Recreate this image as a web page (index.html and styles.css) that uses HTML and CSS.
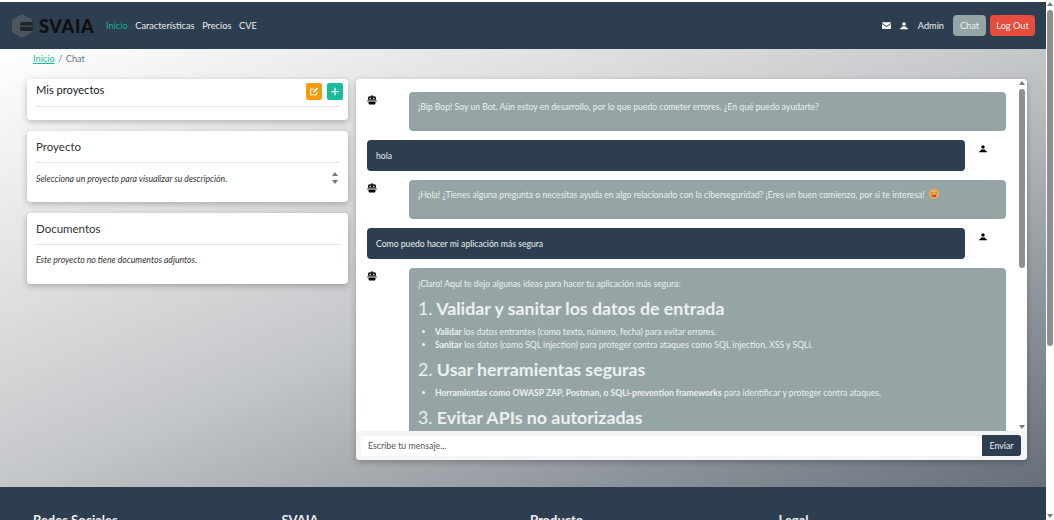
FILE: index.html
```html
<!DOCTYPE html>
<html lang="es">
<head>
  <meta charset="UTF-8" />
  <title>SVAIA - Chat</title>
  <link rel="stylesheet" href="styles.css">
</head>
<body>

<div class="page">
  <nav class="navbar">
    <a class="brand" href="#">
      <svg class="brand-logo" viewBox="0 0 22 24">
        <path d="M11 0 21 5.500V18L11 24 1 18V5.500Z" fill="#4b5660"/>
        <rect x="9" y="8" width="13" height="9" rx="2" fill="#23272c"/>
        <rect x="9" y="11.500" width="13" height="1.200" fill="#4b5660"/>
      </svg>
      <span class="brand-name">SVAIA</span>
    </a>
    <ul class="nav-links">
      <li><a class="active" href="#">Inicio</a></li>
      <li><a href="#">Características</a></li>
      <li><a href="#">Precios</a></li>
      <li><a href="#">CVE</a></li>
    </ul>
    <div class="nav-right">
      <svg class="nav-icon" viewBox="0 0 16 12"><path d="M0 1.500V1a1 1 0 0 1 1-1h14a1 1 0 0 1 1 1v.5L8 7ZM0 3.200V11a1 1 0 0 0 1 1h14a1 1 0 0 0 1-1V3.200L8 8.800Z" fill="#fff"/></svg>
      <svg class="nav-icon user" viewBox="0 0 12 12"><use href="#user-shape"/></svg>
      <span class="nav-user">Admin</span>
      <a class="btn btn-chat" href="#">Chat</a>
      <a class="btn btn-logout" href="#">Log Out</a>
    </div>
  </nav>

  <main class="content">
    <div class="breadcrumb"><a href="#">Inicio</a><span class="sep">/</span><span>Chat</span></div>

    <div class="columns">
      <aside class="sidebar">
        <section class="card card-projects">
          <div class="card-head">
            <h3 class="title-dark">Mis proyectos</h3>
            <div class="tools">
              <button class="tool orange" type="button">
                <svg viewBox="0 0 12 12"><path d="M9 6.500V10H2V3h3.500" fill="none" stroke="#fff" stroke-width="1.200"/><path d="M5 7.200 5.400 5.200 9.400 1.200 10.800 2.600 6.800 6.600Z" fill="#fff"/></svg>
              </button>
              <button class="tool teal" type="button">
                <svg viewBox="0 0 12 12"><path d="M6 1.500v9M1.500 6h9" stroke="#fff" stroke-width="1.500"/></svg>
              </button>
            </div>
          </div>
          <hr>
        </section>

        <section class="card">
          <h3>Proyecto</h3>
          <hr>
          <div class="card-row">
            <p>Selecciona un proyecto para visualizar su descripción.</p>
            <div class="sort-arrows"><i class="arrow-up"></i><i class="arrow-down"></i></div>
          </div>
        </section>

        <section class="card">
          <h3>Documentos</h3>
          <hr>
          <p>Este proyecto no tiene documentos adjuntos.</p>
        </section>
      </aside>

      <section class="chat">
        <div class="chat-body">
          <div class="messages">
            <div class="msg bot">
              <svg class="msg-icon" viewBox="0 0 12 12"><use href="#robot-shape"/></svg>
              <div class="bubble">¡Bip Bop! Soy un Bot. Aún estoy en desarrollo, por lo que puedo cometer errores. ¿En qué puedo ayudarte?</div>
            </div>
            <div class="msg user">
              <div class="bubble">hola</div>
              <svg class="msg-icon" viewBox="0 0 12 12"><use href="#user-shape"/></svg>
            </div>
            <div class="msg bot">
              <svg class="msg-icon" viewBox="0 0 12 12"><use href="#robot-shape"/></svg>
              <div class="bubble">¡Hola! ¿Tienes alguna pregunta o necesitas ayuda en algo relacionado con la ciberseguridad? ¡Eres un buen comienzo, por si te interesa!
                <svg class="smile" viewBox="0 0 12 12"><circle cx="6" cy="6" r="6" fill="#f3ab4e"/><path d="M2.500 4.800q1-1.200 2 0M7.500 4.800q1-1.200 2 0" fill="none" stroke="#8a4a1c" stroke-width=".9"/><path d="M2.600 6.800h6.800Q9 10 6 10T2.600 6.800Z" fill="#b5562a"/></svg>
              </div>
            </div>
            <div class="msg user">
              <div class="bubble">Como puedo hacer mi aplicación más segura</div>
              <svg class="msg-icon" viewBox="0 0 12 12"><use href="#user-shape"/></svg>
            </div>
            <div class="msg bot">
              <svg class="msg-icon" viewBox="0 0 12 12"><use href="#robot-shape"/></svg>
              <div class="bubble long">
                <p>¡Claro! Aquí te dejo algunas ideas para hacer tu aplicación más segura:</p>
                <h2><span>1.</span> Validar y sanitar los datos de entrada</h2>
                <ul>
                  <li><b>Validar</b> los datos entrantes (como texto, número, fecha) para evitar errores.</li>
                  <li><b>Sanitar</b> los datos (como SQL injection) para proteger contra ataques como SQL injection, XSS y SQLi.</li>
                </ul>
                <h2><span>2.</span> Usar herramientas seguras</h2>
                <ul>
                  <li><b>Herramientas como OWASP ZAP, Postman, o SQLi-prevention frameworks</b> para identificar y proteger contra ataques.</li>
                </ul>
                <h2><span>3.</span> Evitar APIs no autorizadas</h2>
              </div>
            </div>
          </div>
          <div class="scrollbar chat-scroll">
            <i class="arrow-up"></i>
            <div class="thumb"></div>
            <i class="arrow-down"></i>
          </div>
        </div>
        <form class="chat-form">
          <input type="text" placeholder="Escribe tu mensaje...">
          <button type="submit">Enviar</button>
        </form>
      </section>
    </div>
  </main>

  <footer class="footer">
    <h4>Redes Sociales</h4>
    <h4>SVAIA</h4>
    <h4>Producto</h4>
    <h4>Legal</h4>
  </footer>
</div>

<div class="scrollbar page-scroll">
  <i class="arrow-up"></i>
  <div class="thumb"></div>
  <i class="arrow-down"></i>
</div>

<svg class="defs" width="0" height="0">
  <defs>
    <g id="user-shape">
      <circle cx="6" cy="3" r="2.600"/>
      <path d="M2.600 6.600h6.800l.6 2.600H12V11H0V9.200h2Z"/>
    </g>
    <g id="robot-shape">
      <rect x="5.400" y="0" width="1.200" height="2"/>
      <path d="M3.200 1.600h5.600a2 2 0 0 1 2 2v2.200H1.200V3.600a2 2 0 0 1 2-2ZM3.800 3a.9.9 0 1 0 0 1.800.9.9 0 0 0 0-1.800ZM8.200 3a.9.9 0 1 0 0 1.800.9.9 0 0 0 0-1.800Z" fill-rule="evenodd"/>
      <rect x="0" y="6.600" width="12" height="1" />
      <path d="M1.800 8.200h8.400V10a1.500 1.500 0 0 1-1.500 1.500H3.300A1.500 1.500 0 0 1 1.800 10Z"/>
    </g>
  </defs>
</svg>

</body>
</html>
```

FILE: styles.css
```css
* {
  box-sizing: border-box;
}
html, body {
  height: 520px;
  overflow: hidden;
}
body {
  margin: 0;
  display: flex;
  background: #fff;
  font-family: 'Lato', sans-serif;
  font-size: 9.2px;
  color: #333;
}
a {
  text-decoration: none;
}
.defs {
  display: none;
}
.page {
  width: 1046px;
  height: 520px;
  padding-top: 2px;
  display: flex;
  flex-direction: column;
  overflow: hidden;
}

/* navbar */
.navbar {
  height: 47px;
  flex-shrink: 0;
  background: #2c3e50;
  display: flex;
  align-items: center;
  padding: 0 11px;
}
.brand {
  display: flex;
  align-items: center;
  gap: 6px;
  width: 95px;
}
.brand-logo {
  width: 22px;
  height: 24px;
}
.brand-name {
  color: #0d0f12;
  font-weight: 900;
  font-size: 18px;
  letter-spacing: .7px;
}
.nav-links {
  display: flex;
  gap: 7.7px;
  list-style: none;
  margin: 0;
  padding: 0;
}
.nav-links a {
  color: #ecf0f1;
  font-size: 9.2px;
}
.nav-links a.active {
  color: #18b08f;
}
.nav-right {
  margin-left: auto;
  display: flex;
  align-items: center;
}
.nav-icon {
  width: 9px;
  height: 7px;
  margin-right: 9px;
}
.nav-icon.user {
  width: 8px;
  height: 8px;
  fill: #fff;
}
.nav-user {
  color: #ecf0f1;
  margin: 0 9px 0 1px;
}
.btn {
  height: 21px;
  line-height: 21px;
  border-radius: 4px;
  color: #ecf0f1;
  text-align: center;
}
.btn-chat {
  width: 33px;
  background: #95a5a6;
  margin-right: 4px;
}
.btn-logout {
  width: 45px;
  background: #e74c3c;
}

/* main area */
.content {
  flex: 1;
  padding: 0 19px 0 27px;
  background: linear-gradient(to bottom right, #fff 0%, #c4c7c9 50%, #666e79 100%);
}
.breadcrumb {
  height: 30px;
  padding: 4px 0 0 6px;
  display: flex;
  align-items: flex-start;
  line-height: 12px;
  color: #6c757d;
}
.breadcrumb a {
  color: #18bc9c;
  text-decoration: underline;
}
.sep {
  margin: 0 3.5px;
}
.columns {
  display: flex;
  gap: 8px;
  align-items: flex-start;
}

/* left cards */
.sidebar {
  width: 321px;
  flex-shrink: 0;
  display: flex;
  flex-direction: column;
  gap: 11px;
}
.card {
  background: #fff;
  border-radius: 4px;
  height: 71px;
  padding: 9px 9px 0;
  box-shadow: 0 2px 6px rgba(0, 0, 0, .25);
}
.card h3 {
  margin: 0;
  font-size: 11.5px;
  font-weight: 400;
  color: #333;
  line-height: 14px;
}
.card h3.title-dark {
  color: #15181c;
  font-size: 11.1px;
}
.card hr {
  border: 0;
  border-top: 1px solid #e3e3e3;
  margin: 8px 0 9px;
}
.card p {
  margin: 0;
  font-size: 8.7px;
  font-style: italic;
  color: #333;
  line-height: 11px;
}
.card-projects {
  height: 41px;
  padding-top: 4px;
}
.card-head {
  display: flex;
  justify-content: space-between;
  height: 18px;
}
.card-projects hr {
  margin: 5px 0 0;
}
.tools {
  display: flex;
  gap: 5px;
  margin-right: -4px;
}
.tool {
  width: 16px;
  height: 17px;
  border: 0;
  border-radius: 2px;
  padding: 3px;
  display: flex;
}
.tool.orange {
  background: #f39c12;
}
.tool.teal {
  background: #18bc9c;
}
.card-row {
  display: flex;
  justify-content: space-between;
  align-items: center;
}
.sort-arrows {
  display: flex;
  flex-direction: column;
  gap: 4px;
  margin-right: 1px;
}
.arrow-up, .arrow-down {
  display: block;
  width: 0;
  height: 0;
  border-left: 3px solid transparent;
  border-right: 3px solid transparent;
}
.arrow-up {
  border-bottom: 4px solid #777;
}
.arrow-down {
  border-top: 4px solid #777;
}

/* chat */
.chat {
  width: 671px;
  height: 381px;
  flex-shrink: 0;
  background: #fff;
  border-radius: 4px;
  box-shadow: 0 2px 6px rgba(0, 0, 0, .25);
  display: flex;
  flex-direction: column;
  overflow: hidden;
}
.chat-body {
  flex: 1;
  display: flex;
  min-height: 0;
}
.messages {
  flex: 1;
  overflow: hidden;
  padding: 13px 11px 0;
}
.msg {
  display: flex;
  margin-bottom: 9px;
}
.msg-icon {
  flex-shrink: 0;
  width: 10px;
  height: 10px;
}
.msg.bot .msg-icon {
  margin: 3px 32px 0 0;
}
.msg.user .msg-icon {
  width: 8px;
  height: 8px;
  margin: 5px 19px 0 14px;
}
.bubble {
  flex: 1;
  border-radius: 4px;
  padding: 9px;
  font-size: 8.65px;
  line-height: 12px;
  color: #ecf0f1;
}
.msg.bot .bubble {
  background: #95a5a6;
  min-height: 39px;
}
.msg.user .bubble {
  background: #2c3e50;
  min-height: 31px;
  padding-top: 10px;
}
.smile {
  width: 10px;
  height: 10px;
  margin-left: 2px;
  vertical-align: -1px;
}
.bubble.long {
  padding-top: 10px;
  padding-bottom: 40px;
}
.bubble.long p {
  margin: 0 0 8px;
}
.bubble h2 {
  margin: 0 0 6px;
  font-size: 17.8px;
  line-height: 21px;
  font-weight: 700;
}
.bubble h2 span {
  font-weight: 400;
}
.bubble ul {
  margin: 0 0 8px;
  padding-left: 17px;
}
.bubble li {
  line-height: 13px;
}

/* scrollbars */
.scrollbar {
  display: flex;
  flex-direction: column;
  align-items: center;
  background: #fff;
}
.scrollbar .thumb {
  background: #8f8f8f;
  border-radius: 3px;
  width: 6px;
}
.chat-scroll {
  width: 10px;
  padding-top: 2px;
}
.chat-scroll .thumb {
  height: 179px;
  margin-top: 4px;
}
.chat-scroll .arrow-down {
  margin-top: auto;
  margin-bottom: 2px;
}
.page-scroll {
  width: 8px;
  height: 520px;
  flex-shrink: 0;
  padding: 2px 0;
}
.page-scroll .thumb {
  height: 336px;
  margin-top: 4px;
}
.page-scroll .arrow-down {
  margin-top: auto;
}

/* input */
.chat-form {
  height: 29px;
  flex-shrink: 0;
  background: #f4f5f6;
  display: flex;
  align-items: center;
  padding: 0 6px 0 5px;
}
.chat-form input {
  flex: 1;
  height: 20px;
  border: 0;
  background: #fff;
  padding: 0 7px;
  font-family: 'Lato', sans-serif;
  font-size: 8.8px;
  border-radius: 3px 0 0 3px;
  outline: none;
}
.chat-form input::placeholder {
  color: #555;
}
.chat-form button {
  width: 39px;
  height: 21px;
  border: 0;
  background: #2c3e50;
  color: #ecf0f1;
  font-family: 'Lato', sans-serif;
  font-size: 8.8px;
  border-radius: 0 3px 3px 0;
}

/* footer */
.footer {
  height: 33px;
  flex-shrink: 0;
  background: #2c3e50;
  padding: 26px 0 0 33px;
  display: grid;
  grid-template-columns: repeat(4, 248.5px);
  overflow: hidden;
}
.footer h4 {
  margin: 0;
  color: #ecf0f1;
  font-size: 13px;
  font-weight: 700;
  line-height: 14px;
}
```
